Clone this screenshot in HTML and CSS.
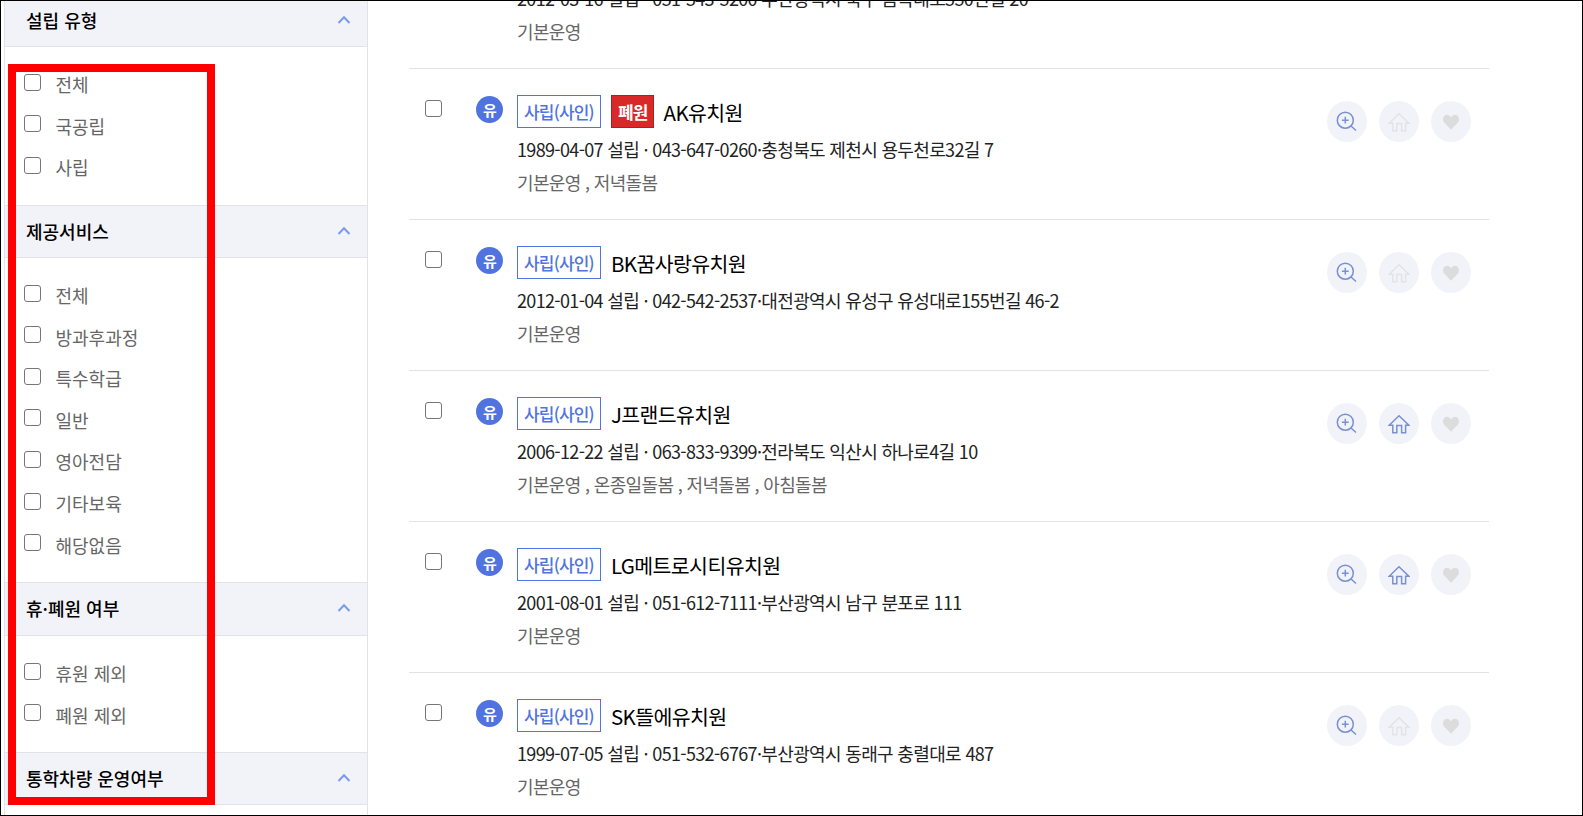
FILE: index.html
```html
<!DOCTYPE html>
<html lang="ko">
<head>
    <meta charset="UTF-8">
    <meta name="viewport" content="width=device-width, initial-scale=1.0">
    <title>유치원 찾기</title>
    <link rel="stylesheet" href="styles.css">
</head>
<body>

<!-- icons -->
<svg class="sprite">
    <symbol id="zoom" viewBox="0 0 22 22">
        <circle cx="9.3" cy="9.2" r="8" />
        <path d="M9.3 5.8v6.8M5.9 9.2h6.8M15 15l5 4.5" />
    </symbol>
    <symbol id="home" viewBox="0 0 22 22">
        <path d="M1.2 12.2L11 2.800l9.800 9.400h-3.200v7.600h-4v-7.400H8.800v7.400h-4v-7.600z" />
    </symbol>
    <symbol id="heart" viewBox="0 0 22 22">
        <path d="M11 18.800L4.100 11.600C2.500 9.700 2.700 6.500 4.200 5 6.500 2.900 9.600 3.800 11 6.500 12.400 3.800 15.500 2.900 17.800 5c1.500 1.500 1.700 4.700.1 6.600z" />
    </symbol>
    <symbol id="arrow" viewBox="0 0 14 10">
        <path d="M1.500 8L7 2.300 12.500 8" />
    </symbol>
</svg>

<div class="page">
    <aside class="filter">
        <h3 class="first">설립 유형<svg><use href="#arrow" /></svg></h3>
        <ul>
            <li><label><input type="checkbox">전체</label></li>
            <li><label><input type="checkbox">국공립</label></li>
            <li><label><input type="checkbox">사립</label></li>
        </ul>
        <h3>제공서비스<svg><use href="#arrow" /></svg></h3>
        <ul>
            <li><label><input type="checkbox">전체</label></li>
            <li><label><input type="checkbox">방과후과정</label></li>
            <li><label><input type="checkbox">특수학급</label></li>
            <li><label><input type="checkbox">일반</label></li>
            <li><label><input type="checkbox">영아전담</label></li>
            <li><label><input type="checkbox">기타보육</label></li>
            <li><label><input type="checkbox">해당없음</label></li>
        </ul>
        <h3 class="tall">휴·폐원 여부<svg><use href="#arrow" /></svg></h3>
        <ul>
            <li><label><input type="checkbox">휴원 제외</label></li>
            <li><label><input type="checkbox">폐원 제외</label></li>
        </ul>
        <h3>통학차량 운영여부<svg><use href="#arrow" /></svg></h3>
        <ul></ul>
    </aside>

    <main class="list">
        <article class="item">
            <input type="checkbox">
            <span class="mark">유</span>
            <div class="info">
                <div class="name"><span class="tag">사립(사인)</span></div>
                <p class="addr">2012-03-16 설립 · 051-543-5200·부산광역시 북구 금곡대로550번길 20</p>
                <p class="service">기본운영</p>
            </div>
        </article>
        <article class="item">
            <input type="checkbox">
            <span class="mark">유</span>
            <div class="info">
                <div class="name"><span class="tag">사립(사인)</span><span class="tag closed">폐원</span><a>AK유치원</a></div>
                <p class="addr">1989-04-07 설립 · 043-647-0260·충청북도 제천시 용두천로32길 7</p>
                <p class="service">기본운영 , 저녁돌봄</p>
            </div>
            <div class="btns">
                <button><svg><use href="#zoom" /></svg></button>
                <button class="off"><svg><use href="#home" /></svg></button>
                <button class="heart"><svg><use href="#heart" /></svg></button>
            </div>
        </article>
        <article class="item">
            <input type="checkbox">
            <span class="mark">유</span>
            <div class="info">
                <div class="name"><span class="tag">사립(사인)</span><a>BK꿈사랑유치원</a></div>
                <p class="addr">2012-01-04 설립 · 042-542-2537·대전광역시 유성구 유성대로155번길 46-2</p>
                <p class="service">기본운영</p>
            </div>
            <div class="btns">
                <button><svg><use href="#zoom" /></svg></button>
                <button class="off"><svg><use href="#home" /></svg></button>
                <button class="heart"><svg><use href="#heart" /></svg></button>
            </div>
        </article>
        <article class="item">
            <input type="checkbox">
            <span class="mark">유</span>
            <div class="info">
                <div class="name"><span class="tag">사립(사인)</span><a>J프랜드유치원</a></div>
                <p class="addr">2006-12-22 설립 · 063-833-9399·전라북도 익산시 하나로4길 10</p>
                <p class="service">기본운영 , 온종일돌봄 , 저녁돌봄 , 아침돌봄</p>
            </div>
            <div class="btns">
                <button><svg><use href="#zoom" /></svg></button>
                <button><svg><use href="#home" /></svg></button>
                <button class="heart"><svg><use href="#heart" /></svg></button>
            </div>
        </article>
        <article class="item">
            <input type="checkbox">
            <span class="mark">유</span>
            <div class="info">
                <div class="name"><span class="tag">사립(사인)</span><a>LG메트로시티유치원</a></div>
                <p class="addr">2001-08-01 설립 · 051-612-7111·부산광역시 남구 분포로 111</p>
                <p class="service">기본운영</p>
            </div>
            <div class="btns">
                <button><svg><use href="#zoom" /></svg></button>
                <button><svg><use href="#home" /></svg></button>
                <button class="heart"><svg><use href="#heart" /></svg></button>
            </div>
        </article>
        <article class="item">
            <input type="checkbox">
            <span class="mark">유</span>
            <div class="info">
                <div class="name"><span class="tag">사립(사인)</span><a>SK뜰에유치원</a></div>
                <p class="addr">1999-07-05 설립 · 051-532-6767·부산광역시 동래구 충렬대로 487</p>
                <p class="service">기본운영</p>
            </div>
            <div class="btns">
                <button><svg><use href="#zoom" /></svg></button>
                <button class="off"><svg><use href="#home" /></svg></button>
                <button class="heart"><svg><use href="#heart" /></svg></button>
            </div>
        </article>
    </main>

    <div class="highlight"></div>
</div>

</body>
</html>
```

FILE: styles.css
```css
* {
    box-sizing: border-box;
}
body {
    margin: 0;
    font-family: "Noto Sans CJK KR", sans-serif;
    color: #000;
    background-color: #fff;
}
h3, ul, p {
    margin: 0;
    padding: 0;
}
.sprite {
    display: none;
}
.page {
    position: relative;
    display: flex;
    width: 1583px;
    height: 816px;
    border: 1px solid #000;
    overflow: hidden;
}
input[type="checkbox"] {
    appearance: none;
    flex: none;
    width: 17px;
    height: 17px;
    margin: 0;
    border: 1px solid #767676;
    border-radius: 3px;
    background-color: #fff;
}

/* left filter */
.filter {
    flex: none;
    width: 364px;
    margin-left: 3px;
    border-left: 1px solid #e2e2ea;
    border-right: 1px solid #e2e2ea;
}
.filter h3 {
    display: flex;
    justify-content: space-between;
    align-items: center;
    height: 53px;
    padding: 0 16px 1px 21px;
    border-top: 1px solid #e2e3ea;
    border-bottom: 1px solid #e2e3ea;
    background-color: #f2f3f9;
    font-size: 18px;
    font-weight: 500;
    letter-spacing: 0;
}
.filter h3.first {
    height: 46px;
    padding-bottom: 8px;
    border-top: none;
}
.filter h3.tall {
    height: 54px;
}
.filter h3 svg {
    width: 14px;
    height: 10px;
    fill: none;
    stroke: #7c9aea;
    stroke-width: 2;
}
.filter ul {
    padding: 16.5px 0 16.5px 19px;
    list-style: none;
}
.filter li {
    height: 41.6px;
}
.filter label {
    display: flex;
    align-items: center;
    height: 100%;
    gap: 14.5px;
    color: #666;
    font-size: 18px;
    letter-spacing: 0;
}
.filter input[type="checkbox"] {
    margin-bottom: 4px;
}

/* search result */
.list {
    width: 1080px;
    margin: -84px 0 0 41px;
}
.item {
    display: flex;
    align-items: flex-start;
    height: 151px;
    padding: 26px 18px 0 16px;
    border-top: 1px solid #e3e3e3;
}
.item > input[type="checkbox"] {
    margin-top: 5px;
}
.mark {
    flex: none;
    width: 27px;
    height: 27px;
    margin: 1px 14px 0 34px;
    border-radius: 50%;
    background-color: #5173df;
    color: #fff;
    font-size: 15px;
    font-weight: 700;
    line-height: 27px;
    text-align: center;
    text-indent: 1px;
}
.info {
    flex: 1;
    letter-spacing: -0.65px;
}
.name {
    display: flex;
    gap: 10px;
    height: 33px;
}
.name a {
    font-size: 20.5px;
    line-height: 34px;
    letter-spacing: -0.6px;
}
.tag {
    padding: 0 6px;
    border: 1px solid #5173df;
    color: #5173df;
    font-size: 17px;
    font-weight: 500;
    line-height: 31px;
    letter-spacing: -0.8px;
}
.closed {
    padding-right: 5px;
    border-color: #a82020;
    background-color: #d82828;
    color: #fff;
    font-weight: 700;
}
.addr {
    margin-top: 5px;
    color: #222;
    font-size: 18px;
    line-height: 33px;
}
.service {
    color: #666;
    font-size: 18px;
    line-height: 33px;
}
.btns {
    display: flex;
    gap: 12px;
    margin-top: 6px;
}
.btns button {
    display: flex;
    justify-content: center;
    align-items: center;
    width: 40px;
    height: 41px;
    padding: 0;
    border: none;
    border-radius: 50%;
    background-color: #f2f3f9;
}
.btns svg {
    width: 22px;
    height: 22px;
    fill: none;
    stroke: #7890d4;
    stroke-width: 1.5;
}
.btns .off svg {
    stroke: #e2e3e6;
}
.btns .heart svg {
    fill: #dcdcdc;
    stroke: none;
}

/* red guide box over the filter */
.highlight {
    position: absolute;
    top: 63px;
    left: 7px;
    width: 207px;
    height: 741px;
    border: 8px solid #f00;
}
```
